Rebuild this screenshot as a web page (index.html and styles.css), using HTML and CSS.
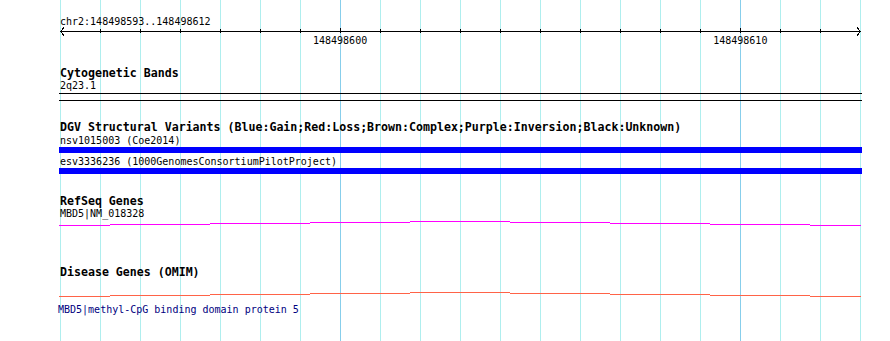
FILE: index.html
```html
<!DOCTYPE html>
<html lang="en">
<head>
  <meta charset="UTF-8">
  <title>chr2:148498593..148498612</title>
  <link rel="stylesheet" href="styles.css">
</head>
<body>

<div class="panel">
  <div class="pos">chr2:148498593..148498612</div>

  <svg class="ruler" viewBox="0 0 803 10" xmlns="http://www.w3.org/2000/svg">
    <path d="M1 5.5H802" stroke="#000" stroke-width="1"/>
    <path d="M5 1.5L1.5 5.5L5 9.5M798 1.5L801.5 5.5L798 9.5" fill="none" stroke="#000" stroke-width="1"/>
    <path d="M41.5 3V7M81.5 3V7M121.5 3V7M161.5 3V7M201.5 3V7M241.5 3V7M281.5 2V7M321.5 3V7M361.5 3V7M401.5 3V7M441.5 3V7M481.5 3V7M521.5 3V7M561.5 3V7M601.5 3V7M641.5 3V7M681.5 2V7M721.5 3V7M761.5 3V7" stroke="#000" stroke-width="1"/>
  </svg>
  <div class="ticks">
    <span>148498600</span>
    <span class="next">148498610</span>
  </div>

  <div class="track-title first">Cytogenetic Bands</div>
  <div class="label">2q23.1</div>
  <div class="band"></div>

  <div class="track-title dgv">DGV Structural Variants (Blue:Gain;Red:Loss;Brown:Complex;Purple:Inversion;Black:Unknown)</div>
  <div class="label tight">nsv1015003 (Coe2014)</div>
  <div class="bar"></div>
  <div class="label gap">esv3336236 (1000GenomesConsortiumPilotProject)</div>
  <div class="bar"></div>

  <div class="track-title refseq">RefSeq Genes</div>
  <div class="label">MBD5|NM_018328</div>
  <svg class="intron" viewBox="0 0 803 7" xmlns="http://www.w3.org/2000/svg">
    <path d="M0 5.5H51M51 4.5H151M151 3.5H251M251 2.5H351M351 1.5H451M451 2.5H551M551 3.5H651M651 4.5H751M751 5.5H802" stroke="#ff00ff" stroke-width="1"/>
  </svg>

  <div class="track-title omim">Disease Genes (OMIM)</div>
  <svg class="intron omim-line" viewBox="0 0 803 7" xmlns="http://www.w3.org/2000/svg">
    <path d="M0 5.5H51M51 4.5H151M151 3.5H251M251 2.5H351M351 1.5H451M451 2.5H551M551 3.5H651M651 4.5H751M751 5.5H802" stroke="#ff6347" stroke-width="1"/>
  </svg>
  <div class="label desc">MBD5|methyl-CpG binding domain protein 5</div>
</div>

</body>
</html>
```

FILE: styles.css
```css
* {
  box-sizing: border-box;
}

body {
  margin: 0;
  background: #fff;
  font-family: "DejaVu Sans Mono", monospace;
  color: #000;
}

.panel {
  box-sizing: content-box;
  width: 801px;
  height: 341px;
  padding: 0 29px 0 60px;
  overflow: hidden;
  background-image:
    linear-gradient(to right, transparent 280px, #87ceeb 280px, #87ceeb 281px, transparent 281px, transparent 680px, #87ceeb 680px, #87ceeb 681px, transparent 681px),
    linear-gradient(to right, #afeeee 1px, transparent 1px);
  background-size: 100% 100%, 40px 100%;
  background-repeat: no-repeat, repeat-x;
  background-origin: content-box;
  background-clip: content-box;
}

.pos, .label, .ticks {
  font-size: 10px;
  line-height: 13px;
  white-space: nowrap;
}

.pos {
  padding-top: 15px;
}

svg {
  display: block;
  shape-rendering: crispEdges;
}

.ruler {
  width: 803px;
  height: 10px;
  margin: -2px 0 0 -1px;
}

.ticks {
  margin-top: -2px;
  padding-left: 253px;
}

.ticks .next {
  margin-left: 340px;
}

.track-title {
  font-size: 11.6px;
  font-weight: bold;
  line-height: 11px;
  white-space: nowrap;
}

.track-title.first {
  margin-top: 21px;
}

.band {
  width: 803px;
  height: 8px;
  margin: 1px 0 0 -1px;
  border-top: 1px solid #000;
  border-bottom: 1px solid #000;
}

.track-title.dgv {
  margin-top: 21px;
}

.label.tight {
  margin-top: 1px;
}

.label.gap {
  margin-top: 2px;
}

.bar {
  width: 803px;
  height: 6px;
  margin-left: -1px;
  background: #0000ff;
}

.track-title.refseq {
  margin-top: 22px;
}

.intron {
  width: 803px;
  height: 7px;
  margin-left: -1px;
}

.track-title.omim {
  margin-top: 40px;
}

.omim-line {
  margin-top: 13px;
}

.label.desc {
  margin: 5px 0 0 -2px;
  color: #000080;
}
```
